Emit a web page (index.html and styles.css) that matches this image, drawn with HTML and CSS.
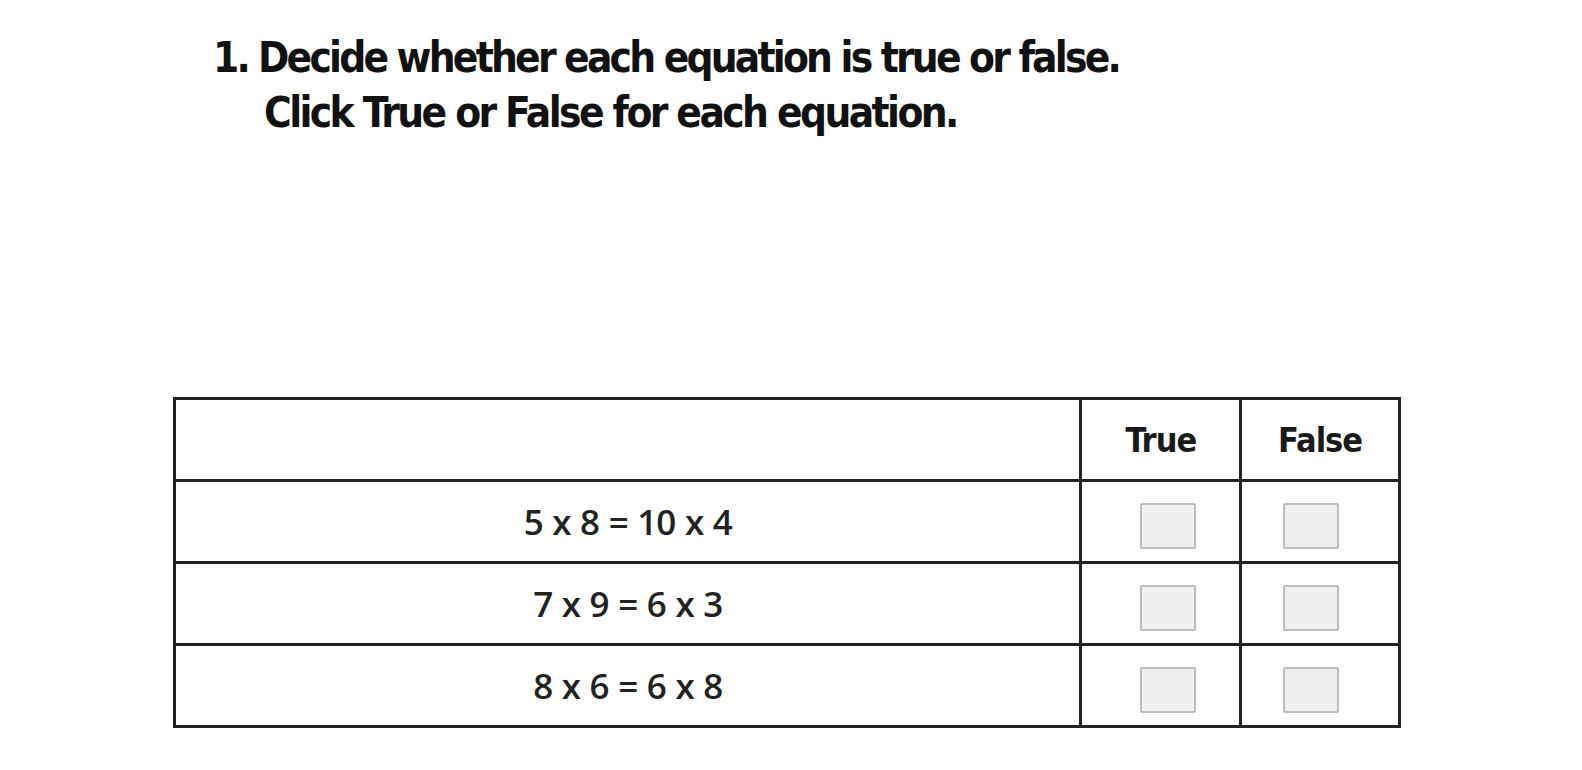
FILE: index.html
```html
<!DOCTYPE html>
<html>
<head>
<meta charset="utf-8">
<link rel="stylesheet" href="styles.css">
</head>
<body>
<div class="page">
  <div class="prompt">
    <div class="line"><span class="num">1.</span><span>Decide whether each equation is true or false.</span></div>
    <div class="line indent">Click True or False for each equation.</div>
  </div>
  <table class="grid">
    <colgroup>
      <col class="c-eq">
      <col class="c-t">
      <col class="c-f">
    </colgroup>
    <thead>
      <tr><th></th><th class="hd">True</th><th class="hd">False</th></tr>
    </thead>
    <tbody>
      <tr><td class="eq">5 x 8 = 10 x 4</td><td class="ck ck-t"><input type="checkbox" class="box"></td><td class="ck ck-f"><input type="checkbox" class="box"></td></tr>
      <tr><td class="eq">7 x 9 = 6 x 3</td><td class="ck ck-t"><input type="checkbox" class="box"></td><td class="ck ck-f"><input type="checkbox" class="box"></td></tr>
      <tr><td class="eq">8 x 6 = 6 x 8</td><td class="ck ck-t"><input type="checkbox" class="box"></td><td class="ck ck-f"><input type="checkbox" class="box"></td></tr>
    </tbody>
  </table>
</div>
</body>
</html>
```
FILE: styles.css
```css
html, body {
  margin: 0;
  padding: 0;
  background: #fff;
}
.page {
  padding-top: 30px;
}
.prompt {
  margin-left: 213px;
  font-family: "DejaVu Sans Condensed", "Liberation Sans", sans-serif;
  font-weight: bold;
  font-size: 42px;
  line-height: 55px;
  letter-spacing: -2.8px;
  color: #111;
}
.line {
  display: flex;
  gap: 10px;
  white-space: nowrap;
}
.indent {
  padding-left: 51px;
  letter-spacing: -2.6px;
}
.grid {
  margin-top: 257px;
  margin-left: 173px;
  border-collapse: collapse;
  width: 1228px;
}
.c-eq { width: 909px; }
.c-t { width: 160px; }
.c-f { width: 159px; }
.grid th, .grid td {
  border: 3px solid #222;
  height: 79px;
  padding: 0;
  text-align: center;
  vertical-align: middle;
}
.hd {
  font-family: "DejaVu Sans Condensed", "Liberation Sans", sans-serif;
  font-weight: bold;
  font-size: 34px;
  letter-spacing: -1px;
  color: #1a1a1a;
}
.eq {
  font-family: "Open Sans", sans-serif;
  font-weight: 600;
  font-size: 35px;
  letter-spacing: -1px;
  word-spacing: 1.5px;
  color: #222;
}
.grid .ck-t {
  padding-left: 14px;
}
.grid .ck-f {
  padding-right: 18px;
}
.box {
  appearance: none;
  -webkit-appearance: none;
  display: block;
  margin: 8px auto 0;
  width: 56px;
  height: 46px;
  background: #efefef;
  border: 2px solid #b9bfbf;
  border-radius: 2px;
  box-sizing: border-box;
}
```
